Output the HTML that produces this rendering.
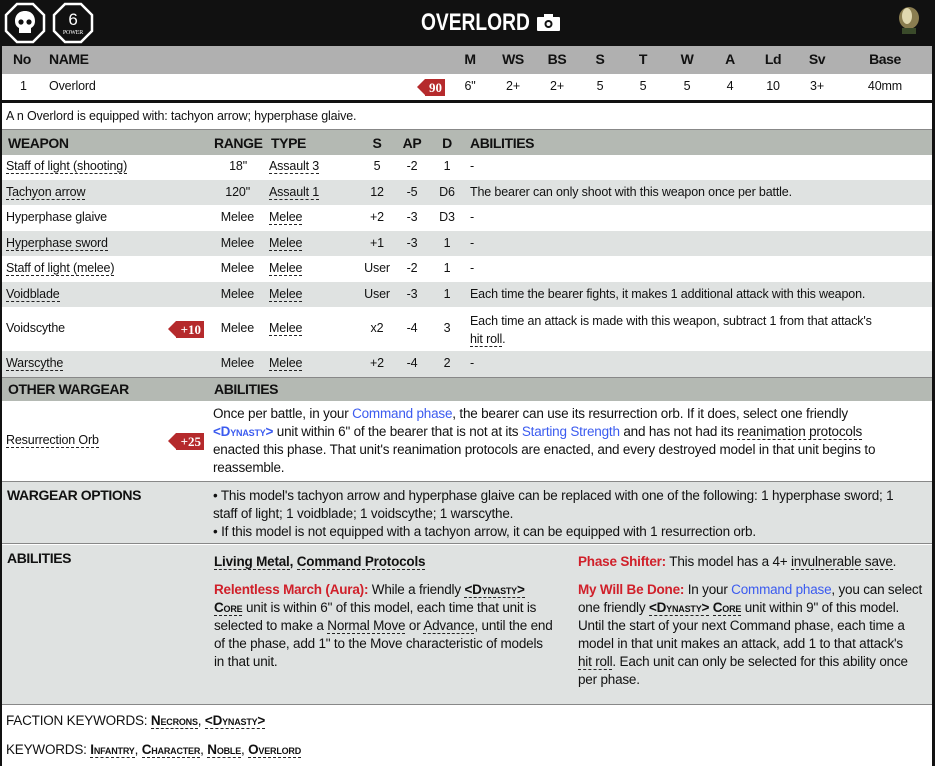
<!DOCTYPE html>
<html><head><meta charset="utf-8"><style>
*{margin:0;padding:0;box-sizing:border-box}
body{width:935px;height:766px;overflow:hidden;background:#fff;font-family:"Liberation Sans",sans-serif;font-size:12.5px;letter-spacing:-0.15px;color:#111;position:relative}
.a{position:absolute;white-space:nowrap}
.b{font-weight:bold;font-size:14px;letter-spacing:-0.4px}
.c{text-align:center;transform:translateX(-50%)}
.r{transform:translateX(-100%)}
.u{border-bottom:1px dashed #222}
.row{position:absolute;left:0;width:932px}
.g{background:#dfe2e1}
.h{background:#b4b9b3}
.blue{color:#3b5bef}
.red{color:#d0202a;font-weight:bold}
.badge{position:absolute;height:17px;background:#b52a2c;color:#fff;font-family:"Liberation Serif",serif;font-weight:bold;font-size:13px;letter-spacing:0;line-height:17px;text-align:right;padding-right:3px}
.badge:before{content:"";position:absolute;left:-8px;top:0;border-right:8px solid #b52a2c;border-top:8.5px solid transparent;border-bottom:8.5px solid transparent}
.sc{font-variant:small-caps;font-weight:bold}
.p{position:absolute;white-space:nowrap;line-height:18px}
.big{font-size:13.5px;letter-spacing:-0.2px}
.ab{font-size:13.5px;letter-spacing:-0.2px}
</style></head><body>
<div class="row" style="top:0;height:46px;background:#111;width:935px"></div>
<svg class="a" style="left:4px;top:2px" width="92" height="42" viewBox="0 0 92 42">
<polygon points="13,2 29,2 40,13 40,29 29,40 13,40 2,29 2,13" fill="none" stroke="#fff" stroke-width="2.5"/>
<path d="M21 9c-7 0-10 5-10 10 0 4 2 6 4 7v5h12v-5c2-1 4-3 4-7 0-5-3-10-10-10z" fill="#fff"/>
<circle cx="17" cy="20" r="2.6" fill="#111"/><circle cx="25" cy="20" r="2.6" fill="#111"/>
<polygon points="61,2 77,2 88,13 88,29 77,40 61,40 50,29 50,13" fill="none" stroke="#fff" stroke-width="2.5"/>
<text x="69" y="23" fill="#fff" font-family="Liberation Sans" font-size="17" text-anchor="middle">6</text>
<text x="69" y="32" fill="#fff" font-family="Liberation Serif" font-size="6" text-anchor="middle">POWER</text>
</svg>
<div class="a" style="left:421px;top:9px;color:#fff;font-weight:bold;font-size:24px;letter-spacing:0;transform:scaleX(0.8);transform-origin:0 0">OVERLORD</div>
<svg class="a" style="left:537px;top:14px" width="23" height="17" viewBox="0 0 23 17"><rect x="0" y="3" width="23" height="14" rx="1" fill="#fff"/><rect x="7" y="0" width="9" height="5" fill="#fff"/><circle cx="11.5" cy="10" r="4" fill="#111"/><circle cx="11.5" cy="10" r="2" fill="#fff"/></svg>
<svg class="a" style="left:892px;top:4px" width="34" height="36"><ellipse cx="17" cy="14" rx="10" ry="11" fill="#8a7d50"/><ellipse cx="15" cy="12" rx="5" ry="8" fill="#e0d8b0"/><rect x="10" y="24" width="14" height="6" fill="#3a4a2a"/></svg>
<div class="row" style="top:46px;height:28px;background:#b0b0b0"></div>
<div class="a b" style="left:13px;top:51px">No</div>
<div class="a b" style="left:49px;top:51px">NAME</div>
<div class="a b c" style="left:470px;top:51px">M</div>
<div class="a b c" style="left:513px;top:51px">WS</div>
<div class="a b c" style="left:557px;top:51px">BS</div>
<div class="a b c" style="left:600px;top:51px">S</div>
<div class="a b c" style="left:643px;top:51px">T</div>
<div class="a b c" style="left:687px;top:51px">W</div>
<div class="a b c" style="left:730px;top:51px">A</div>
<div class="a b c" style="left:773px;top:51px">Ld</div>
<div class="a b c" style="left:817px;top:51px">Sv</div>
<div class="a b c" style="left:885px;top:51px">Base</div>
<div class="a" style="left:20px;top:79px">1</div>
<div class="a" style="left:49px;top:79px">Overlord</div>
<div class="badge" style="left:425px;top:79px;width:20px">90</div>
<div class="a c" style="left:470px;top:79px">6"</div>
<div class="a c" style="left:513px;top:79px">2+</div>
<div class="a c" style="left:557px;top:79px">2+</div>
<div class="a c" style="left:600px;top:79px">5</div>
<div class="a c" style="left:643px;top:79px">5</div>
<div class="a c" style="left:687px;top:79px">5</div>
<div class="a c" style="left:730px;top:79px">4</div>
<div class="a c" style="left:773px;top:79px">10</div>
<div class="a c" style="left:817px;top:79px">3+</div>
<div class="a c" style="left:885px;top:79px">40mm</div>
<div class="row" style="top:100px;height:3px;background:#111"></div>
<div class="a" style="left:6px;top:109px">A n Overlord is equipped with: tachyon arrow; hyperphase glaive.</div>
<div class="row" style="top:129px;height:1px;background:#888"></div>
<div class="row h" style="top:130px;height:25px"></div>
<div class="a b" style="left:8px;top:135px">WEAPON</div>
<div class="a b" style="left:214px;top:135px">RANGE</div>
<div class="a b" style="left:271px;top:135px">TYPE</div>
<div class="a b c" style="left:377px;top:135px">S</div>
<div class="a b c" style="left:412px;top:135px">AP</div>
<div class="a b c" style="left:447px;top:135px">D</div>
<div class="a b" style="left:470px;top:135px">ABILITIES</div>

<div class="row g" style="top:180px;height:25px"></div>
<div class="row g" style="top:231px;height:25px"></div>
<div class="row g" style="top:282px;height:25px"></div>
<div class="row g" style="top:351px;height:26px"></div>

<div class="a u" style="left:6px;top:159px">Staff of light (shooting)</div><div class="a r" style="left:247px;top:159px">18"</div><div class="a u" style="left:269px;top:159px">Assault 3</div><div class="a c" style="left:377px;top:159px">5</div><div class="a c" style="left:412px;top:159px">-2</div><div class="a c" style="left:447px;top:159px">1</div><div class="a" style="left:470px;top:159px">-</div>
<div class="a u" style="left:6px;top:185px">Tachyon arrow</div><div class="a r" style="left:250px;top:185px">120"</div><div class="a u" style="left:269px;top:185px">Assault 1</div><div class="a c" style="left:377px;top:185px">12</div><div class="a c" style="left:412px;top:185px">-5</div><div class="a c" style="left:447px;top:185px">D6</div><div class="a" style="left:470px;top:185px">The bearer can only shoot with this weapon once per battle.</div>
<div class="a" style="left:6px;top:210px">Hyperphase glaive</div><div class="a r" style="left:254px;top:210px">Melee</div><div class="a u" style="left:269px;top:210px">Melee</div><div class="a c" style="left:377px;top:210px">+2</div><div class="a c" style="left:412px;top:210px">-3</div><div class="a c" style="left:447px;top:210px">D3</div><div class="a" style="left:470px;top:210px">-</div>
<div class="a u" style="left:6px;top:236px">Hyperphase sword</div><div class="a r" style="left:254px;top:236px">Melee</div><div class="a u" style="left:269px;top:236px">Melee</div><div class="a c" style="left:377px;top:236px">+1</div><div class="a c" style="left:412px;top:236px">-3</div><div class="a c" style="left:447px;top:236px">1</div><div class="a" style="left:470px;top:236px">-</div>
<div class="a u" style="left:6px;top:261px">Staff of light (melee)</div><div class="a r" style="left:254px;top:261px">Melee</div><div class="a u" style="left:269px;top:261px">Melee</div><div class="a c" style="left:377px;top:261px">User</div><div class="a c" style="left:412px;top:261px">-2</div><div class="a c" style="left:447px;top:261px">1</div><div class="a" style="left:470px;top:261px">-</div>
<div class="a u" style="left:6px;top:287px">Voidblade</div><div class="a r" style="left:254px;top:287px">Melee</div><div class="a u" style="left:269px;top:287px">Melee</div><div class="a c" style="left:377px;top:287px">User</div><div class="a c" style="left:412px;top:287px">-3</div><div class="a c" style="left:447px;top:287px">1</div><div class="a" style="left:470px;top:287px">Each time the bearer fights, it makes 1 additional attack with this weapon.</div>
<div class="a" style="left:6px;top:321px">Voidscythe</div><div class="badge" style="left:176px;top:321px;width:28px">+10</div><div class="a r" style="left:254px;top:321px">Melee</div><div class="a u" style="left:269px;top:321px">Melee</div><div class="a c" style="left:377px;top:321px">x2</div><div class="a c" style="left:412px;top:321px">-4</div><div class="a c" style="left:447px;top:321px">3</div>
<div class="p" style="left:470px;top:312px">Each time an attack is made with this weapon, subtract 1 from that attack's<br><span class="u">hit roll</span>.</div>
<div class="a u" style="left:6px;top:356px">Warscythe</div><div class="a r" style="left:254px;top:356px">Melee</div><div class="a u" style="left:269px;top:356px">Melee</div><div class="a c" style="left:377px;top:356px">+2</div><div class="a c" style="left:412px;top:356px">-4</div><div class="a c" style="left:447px;top:356px">2</div><div class="a" style="left:470px;top:356px">-</div>

<div class="row" style="top:377px;height:1px;background:#888"></div>
<div class="row h" style="top:378px;height:23px"></div>
<div class="a b" style="left:8px;top:381px">OTHER WARGEAR</div>
<div class="a b" style="left:214px;top:381px">ABILITIES</div>
<div class="a u" style="left:6px;top:433px">Resurrection Orb</div><div class="badge" style="left:176px;top:433px;width:28px">+25</div>
<div class="p big" style="left:213px;top:405px">Once per battle, in your <span class="blue">Command phase</span>, the bearer can use its resurrection orb. If it does, select one friendly<br><span class="blue sc">&lt;Dynasty&gt;</span> unit within 6" of the bearer that is not at its <span class="blue">Starting Strength</span> and has not had its <span class="u">reanimation protocols</span><br>enacted this phase. That unit's reanimation protocols are enacted, and every destroyed model in that unit begins to<br>reassemble.</div>

<div class="row g" style="top:481px;height:63px;border-top:1px solid #888;border-bottom:1px solid #888"></div>
<div class="a b" style="left:7px;top:487px">WARGEAR OPTIONS</div>
<div class="p big" style="left:213px;top:487px">• This model's tachyon arrow and hyperphase glaive can be replaced with one of the following: 1 hyperphase sword; 1<br>staff of light; 1 voidblade; 1 voidscythe; 1 warscythe.<br>• If this model is not equipped with a tachyon arrow, it can be equipped with 1 resurrection orb.</div>
<div class="row g" style="top:545px;height:160px;border-bottom:1px solid #888"></div>
<div class="a b" style="left:7px;top:550px">ABILITIES</div>
<div class="a ab" style="left:214px;top:554px;font-weight:bold"><span class="u">Living Metal</span>, <span class="u">Command Protocols</span></div>
<div class="p ab" style="left:214px;top:581px"><span class="red">Relentless March (Aura):</span> While a friendly <span class="u sc">&lt;Dynasty&gt;</span><br><span class="u sc">Core</span> unit is within 6" of this model, each time that unit is<br>selected to make a <span class="u">Normal Move</span> or <span class="u">Advance</span>, until the end<br>of the phase, add 1" to the Move characteristic of models<br>in that unit.</div>
<div class="a ab" style="left:578px;top:554px"><span class="red">Phase Shifter:</span> This model has a 4+ <span class="u">invulnerable save</span>.</div>
<div class="p ab" style="left:578px;top:581px"><span class="red">My Will Be Done:</span> In your <span class="blue">Command phase</span>, you can select<br>one friendly <span class="u sc">&lt;Dynasty&gt;</span> <span class="u sc">Core</span> unit within 9" of this model.<br>Until the start of your next Command phase, each time a<br>model in that unit makes an attack, add 1 to that attack's<br><span class="u">hit roll</span>. Each unit can only be selected for this ability once<br>per phase.</div>
<div class="a big" style="left:6px;top:713px">FACTION KEYWORDS: <span class="u sc">Necrons</span>, <span class="u sc">&lt;Dynasty&gt;</span></div>
<div class="a big" style="left:6px;top:742px">KEYWORDS: <span class="u sc">Infantry</span>, <span class="u sc">Character</span>, <span class="u sc">Noble</span>, <span class="u sc">Overlord</span></div>
<div class="a" style="left:0;top:0;width:2px;height:766px;background:#111"></div>
<div class="a" style="left:932px;top:0;width:3px;height:766px;background:#111"></div>
</body></html>
